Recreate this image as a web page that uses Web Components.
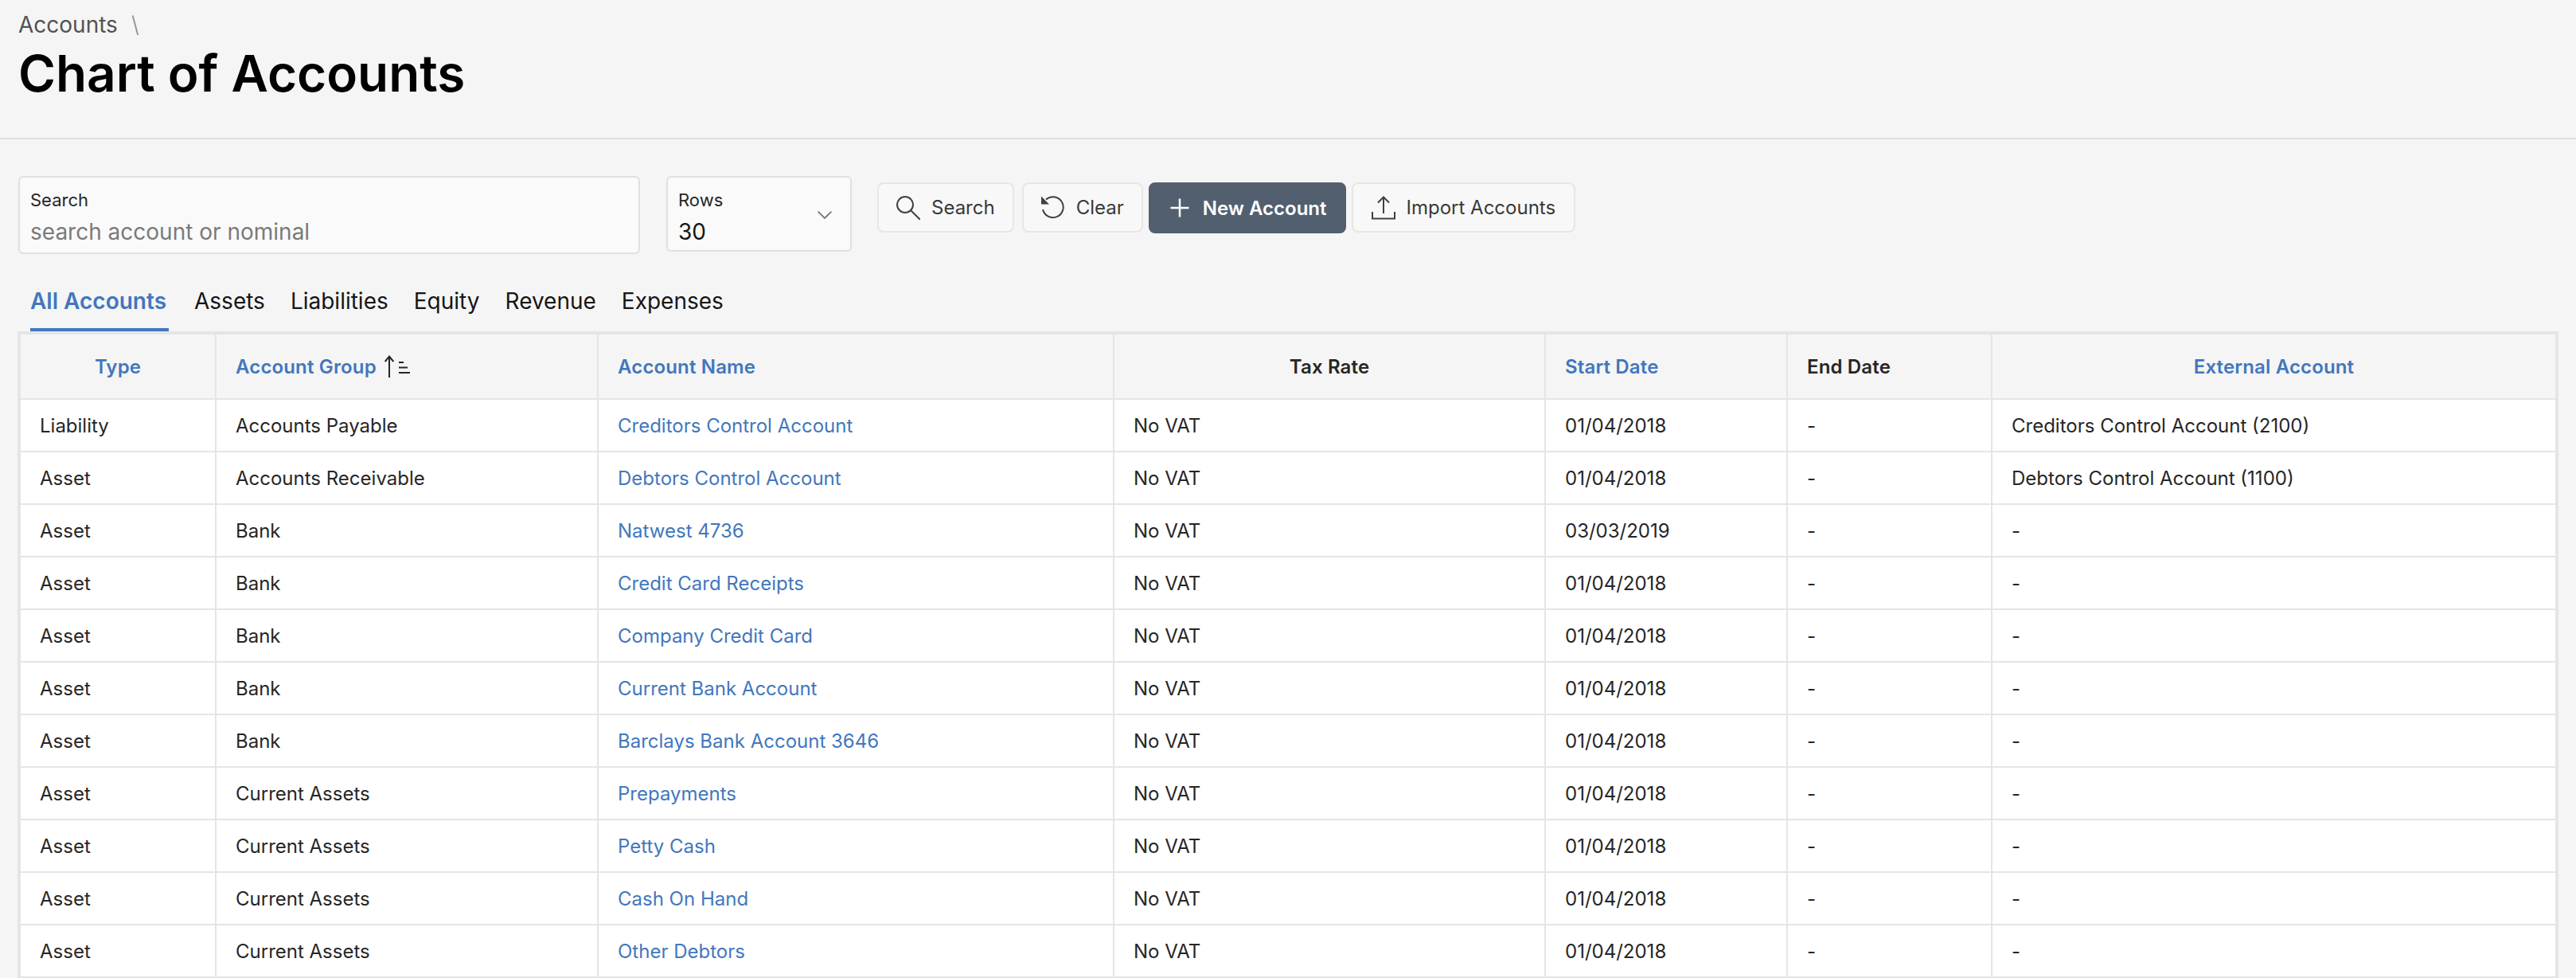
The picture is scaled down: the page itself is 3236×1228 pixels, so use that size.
<!DOCTYPE html>
<html lang="en">
  <head>
    <meta charset="UTF-8" />
    <title>Chart of Accounts</title>
    <style>
      html, body { margin: 0; height: 100%; overflow: hidden; }
      body { background: #f5f5f5; color: #161616; font-family: Inter, "Liberation Sans", sans-serif; }
    </style>
  </head>
  <body>
    <template id="page-head">
      <style>
        :host { display: block; height: 173px; border-bottom: 2px solid #dfdfdf; padding-left: 23px; }
        .crumb { display: flex; gap: 17px; padding-top: 15px; font-size: 28px; line-height: 32px; color: #525252; }
        .crumb i { font-style: normal; color: #8d8d8d; font-weight: 300; }
        h1 { margin: 6px 0 0; font-size: 63.8px; line-height: 78px; font-weight: 600; color: #000; }
      </style>
      <div class="crumb"><slot name="crumb"></slot><i>\</i></div>
      <h1><slot></slot></h1>
    </template>

    <template id="text-field">
      <style>
        :host { display: block; box-sizing: border-box; background: #fafafa; border: 2px solid #e0e0e0; border-radius: 6px; padding: 14px 13px 0; position: relative; }
        .label { display: block; font-size: 22px; line-height: 28px; color: #262626; }
        .value { display: block; margin-top: 9px; font-size: 28px; line-height: 34px; }
        :host([placeholder]) .value { color: #7a7a7a; }
      </style>
      <span class="label"><slot name="label"></slot></span>
      <span class="value"><slot></slot></span>
      <slot name="icon"></slot>
    </template>

    <template id="tool-button">
      <style>
        :host { display: inline-flex; align-items: center; box-sizing: border-box; height: 63px; padding: 0 22px; gap: 14px; background: #f8f8f8; border: 2px solid #e6e6e6; border-radius: 8px; font-size: 24px; color: #393939; white-space: nowrap; }
        :host([primary]) { height: 64px; background: #525f6f; border-color: #525f6f; color: #fff; font-weight: 600; }
        ::slotted(svg) { width: 30px; height: 30px; flex: none; }
      </style>
      <slot name="icon"></slot><slot></slot>
    </template>

    <template id="tab-bar">
      <style>
        :host { display: flex; gap: 32px; padding-left: 38px; height: 62px; }
      </style>
      <slot></slot>
    </template>

    <template id="tab-item">
      <style>
        :host { display: block; box-sizing: border-box; height: 62px; padding-top: 6px; font-size: 28px; line-height: 36px; color: #161616; }
        :host([active]) { min-width: 174px; color: #4277bd; font-weight: 600; border-bottom: 4px solid #4277bd; }
      </style>
      <slot></slot>
    </template>

    <template id="accounts-table">
      <style>
        :host { display: block; margin: 0 22px; box-sizing: border-box; border: 4px solid #e5e5e5; border-bottom: 0; font-size: 24px; color: #262626; background: #fff; }
        table { width: 100%; border-collapse: separate; border-spacing: 0; table-layout: fixed; }
        th, td { box-sizing: border-box; padding: 0 24px; border-bottom: 2px solid #e5e5e5; border-right: 2px solid #e5e5e5; text-align: left; }
        th:last-child, td:last-child { border-right: 0; }
        th { height: 82px; background: #f5f5f5; font-weight: 600; letter-spacing: .15px; }
        td { height: 66px; }
        .sort { color: #4277bd; }
        .c { text-align: center; }
        a { color: #4277bd; text-decoration: none; }
        .head { display: inline-flex; align-items: center; gap: 10px; }
        .head svg { width: 32px; height: 28px; }
      </style>
      <table>
        <colgroup></colgroup>
        <thead><tr></tr></thead>
        <tbody></tbody>
      </table>
    </template>

    <page-head>
      <span slot="crumb">Accounts</span>
      Chart of Accounts
    </page-head>

    <tool-bar>
      <text-field placeholder style="width: 781px; height: 98px">
        <span slot="label">Search</span>
        search account or nominal
      </text-field>
      <text-field style="width: 233px; height: 95px; margin-left: 33px">
        <span slot="label">Rows</span>
        30
        <svg slot="icon" viewBox="0 0 18 10" width="18" height="10" fill="none" stroke="#777" stroke-width="1.8" style="position:absolute;right:23px;top:42px"><path d="M.6.6 9 9 17.4.6" /></svg>
      </text-field>
      <tool-button style="margin-left: 32px">
        <svg slot="icon" viewBox="0 0 30 30" fill="none" stroke="#404040" stroke-width="2"><circle cx="11" cy="11" r="10" /><path d="M18 18l12 12" /></svg>
        Search
      </tool-button>
      <tool-button style="margin-left: 10px">
        <svg slot="icon" viewBox="0 0 30 30" fill="none" stroke="#404040" stroke-width="2"><path d="M6 4.500A13 13 0 1 1 2 17" /><path d="M0 .5v10h10z" fill="#404040" stroke="none" /></svg>
        Clear
      </tool-button>
      <tool-button primary style="margin-left: 7px">
        <svg slot="icon" viewBox="0 0 30 30" fill="none" stroke="#fff" stroke-width="2.5"><path d="M15 3.500v23M3.500 15h23" /></svg>
        New Account
      </tool-button>
      <tool-button style="margin-left: 7px; padding: 0 23px">
        <svg slot="icon" viewBox="0 0 30 30" fill="none" stroke="#404040" stroke-width="2"><path d="M15 22V1.500M8 8.500l7-7 7 7M1 20v8.500h28V20" /></svg>
        Import Accounts
      </tool-button>
    </tool-bar>

    <tab-bar>
      <tab-item active>All Accounts</tab-item>
      <tab-item>Assets</tab-item>
      <tab-item>Liabilities</tab-item>
      <tab-item>Equity</tab-item>
      <tab-item>Revenue</tab-item>
      <tab-item>Expenses</tab-item>
    </tab-bar>

    <accounts-table></accounts-table>

    <script>
      function fromTemplate(id) {
        return document.getElementById(id).content.cloneNode(true);
      }

      class SimpleElement extends HTMLElement {
        connectedCallback() {
          if (this.shadowRoot) return;
          this.attachShadow({ mode: "open" });
          this.shadowRoot.appendChild(fromTemplate(this.constructor.templateId));
        }
      }

      class PageHead extends SimpleElement { static templateId = "page-head"; }
      class TextField extends SimpleElement { static templateId = "text-field"; }
      class ToolButton extends SimpleElement { static templateId = "tool-button"; }
      class TabBar extends SimpleElement { static templateId = "tab-bar"; }
      class TabItem extends SimpleElement { static templateId = "tab-item"; }

      class ToolBar extends HTMLElement {
        connectedCallback() {
          this.attachShadow({ mode: "open" });
          this.shadowRoot.innerHTML = `
            <style>
              :host { display: flex; align-items: flex-start; padding: 46px 0 0 23px; height: 179px; box-sizing: border-box; }
              ::slotted(tool-button) { margin-top: 8px; }
            </style>
            <slot></slot>`;
        }
      }

      // [label, sortable, centred, width]
      const COLUMNS = [
        ["Type", true, true, 246],
        ["Account Group", true, false, 480],
        ["Account Name", true, false, 648],
        ["Tax Rate", false, true, 542],
        ["Start Date", true, false, 304],
        ["End Date", false, false, 257],
        ["External Account", true, true, 707],
      ];

      const ROWS = [
        ["Liability", "Accounts Payable", "Creditors Control Account", "01/04/2018", "Creditors Control Account (2100)"],
        ["Asset", "Accounts Receivable", "Debtors Control Account", "01/04/2018", "Debtors Control Account (1100)"],
        ["Asset", "Bank", "Natwest 4736", "03/03/2019", "-"],
        ["Asset", "Bank", "Credit Card Receipts", "01/04/2018", "-"],
        ["Asset", "Bank", "Company Credit Card", "01/04/2018", "-"],
        ["Asset", "Bank", "Current Bank Account", "01/04/2018", "-"],
        ["Asset", "Bank", "Barclays Bank Account 3646", "01/04/2018", "-"],
        ["Asset", "Current Assets", "Prepayments", "01/04/2018", "-"],
        ["Asset", "Current Assets", "Petty Cash", "01/04/2018", "-"],
        ["Asset", "Current Assets", "Cash On Hand", "01/04/2018", "-"],
        ["Asset", "Current Assets", "Other Debtors", "01/04/2018", "-"],
      ];

      const SORT_ICON = `<svg viewBox="0 0 32 28" fill="none" stroke="#262626" stroke-width="2"><path d="M6 28V1.500M.7 8 6 1.500 11.300 8" /><path d="M18 9h6M18 15.500h11M18 22h14" /></svg>`;

      class AccountsTable extends SimpleElement {
        static templateId = "accounts-table";

        connectedCallback() {
          super.connectedCallback();
          const root = this.shadowRoot;
          root.querySelector("colgroup").innerHTML = COLUMNS.map((c) => `<col style="width:${c[3]}px">`).join("");
          root.querySelector("thead tr").innerHTML = COLUMNS.map(([label, sortable, centred]) => {
            const cls = [sortable ? "sort" : "", centred ? "c" : ""].join(" ");
            const icon = label === "Account Group" ? SORT_ICON : "";
            return `<th class="${cls}"><span class="head">${label}${icon}</span></th>`;
          }).join("");
          root.querySelector("tbody").innerHTML = ROWS.map(
            ([type, group, name, start, external]) => `<tr>
              <td>${type}</td><td>${group}</td><td><a>${name}</a></td><td>No VAT</td>
              <td>${start}</td><td>-</td><td>${external}</td></tr>`
          ).join("");
        }
      }

      customElements.define("page-head", PageHead);
      customElements.define("text-field", TextField);
      customElements.define("tool-button", ToolButton);
      customElements.define("tool-bar", ToolBar);
      customElements.define("tab-bar", TabBar);
      customElements.define("tab-item", TabItem);
      customElements.define("accounts-table", AccountsTable);
    </script>
  </body>
</html>
